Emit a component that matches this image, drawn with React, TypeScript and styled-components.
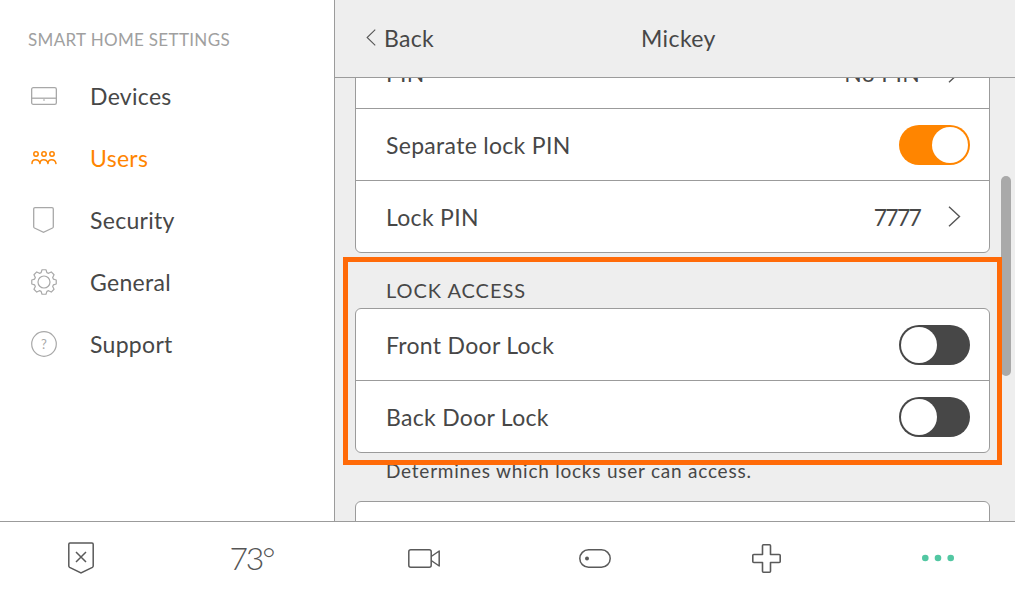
import React from "react";
import styled, { createGlobalStyle } from "styled-components";

const Global = createGlobalStyle`
  html, body { margin: 0; padding: 0; background: #fff; }
  #root { width: 1015px; height: 591px; overflow: hidden; }
  * { box-sizing: border-box; }
`;

const Page = styled.div`
  width: 1015px; height: 591px; display: flex; flex-direction: column;
  font-family: "Lato", "Liberation Sans", sans-serif; color: #474747;
`;
const Top = styled.div`display: flex; height: 521px; position: relative;`;
const Sidebar = styled.nav`
  width: 335px; flex: none; background: #fff; border-right: 1px solid #9b9b9b;
  padding: 30px 0 0 28px;
`;
const SideTitle = styled.div`
  font-size: 17px; line-height: 20px; color: #a0a0a0; margin-bottom: 15px; letter-spacing: .33px;
`;
const SideItem = styled.div<{ $active?: boolean }>`
  display: flex; align-items: center; height: 62px; font-size: 23px; letter-spacing: .3px;
  color: ${p => (p.$active ? "#ff8500" : "#474747")};
`;
const SideIcon = styled.span`
  width: 31px; height: 30px; margin-right: 31px; display: flex; align-items: center; justify-content: center; flex: none;
  svg { display: block; overflow: visible; }
`;
const Main = styled.main`flex: 1; background: #eee; display: flex; flex-direction: column; min-width: 0;`;
const Header = styled.header`
  height: 78px; flex: none; background: #eee; border-bottom: 1px solid #9b9b9b; position: relative; z-index: 2;
  display: grid; grid-template-columns: 275px auto; align-items: center; padding: 0 0 2px 31px; font-size: 23px; letter-spacing: .4px;
`;
const BackLink = styled.div`display: flex; align-items: center; gap: 8px; letter-spacing: .3px; svg { display: block; }`;
const Body = styled.div`flex: 1; overflow: hidden; padding: 0 25px 0 20px;`;
const Card = styled.div<{ $shift?: boolean }>`
  background: #fff; border: 1px solid #9b9b9b; border-radius: 6px;
  margin-top: ${p => (p.$shift ? "-42px" : "0")};
`;
const Row = styled.div`
  height: 72px; display: flex; align-items: center; justify-content: space-between;
  padding: 0 19px 0 30px; font-size: 23px; letter-spacing: .3px; border-bottom: 1px solid #9b9b9b;
  &:last-child { border-bottom: 0; height: 71px; }
`;
const RowEnd = styled.div`display: flex; align-items: center; gap: 28px; margin-right: 9px; svg { display: block; }`;
const Digits = styled.span`letter-spacing: -1.8px;`;
const SectionLabel = styled.div`
  font-size: 20px; line-height: 24px; padding-left: 31px; margin: 25px 0 6px; letter-spacing: .95px;
`;
const Help = styled.div`
  font-size: 19px; line-height: 24px; padding-left: 31px; margin: 6px 0 18px; letter-spacing: .77px;
`;
const Switch = styled.div<{ $on?: boolean }>`
  width: 71px; height: 40px; border-radius: 20px; padding: 2px; display: flex;
  background: ${p => (p.$on ? "#ff8500" : "#474747")};
  justify-content: ${p => (p.$on ? "flex-end" : "flex-start")};
`;
const Knob = styled.div`width: 36px; height: 36px; border-radius: 50%; background: #fff;`;
const Thumb = styled.div`
  position: absolute; left: 1001px; top: 176px; width: 10px; height: 200px; border-radius: 5px; background: #a9a9a9;
`;
const Highlight = styled.div`
  position: absolute; left: 343px; top: 257px; width: 659px; height: 208px; border: 5px solid #ff6a08; z-index: 3;
`;
const Footer = styled.footer`
  height: 70px; flex: none; background: #fff; border-top: 1px solid #9b9b9b;
  display: grid; grid-template-columns: repeat(6, 60px); column-gap: 111.4px; padding-left: 51px; align-items: center;
`;
const Tab = styled.div`
  display: flex; align-items: center; justify-content: center; height: 69px; padding-top: 3px;
  svg { display: block; overflow: visible; }
`;
const Temp = styled.div`font-size: 32px; font-weight: 300; letter-spacing: -2.2px; color: #555; margin: -1px 0 0 -2px;`;
const QMark = styled.text`font-family: "Lato", sans-serif; font-size: 13px; fill: #a8a8a8;`;

const gearPath = (() => {
  const n = 8, cx = 13, cy = 13, ro = 12.4, ri = 9.8;
  let d = "";
  for (let i = 0; i < n; i++) {
    const a = (i * 2 * Math.PI) / n - Math.PI / 2;
    const w = 0.2, g = 0.2;
    const pts = [
      [ri, a - w - g / 2], [ro, a - w + 0.04], [ro, a + w - 0.04], [ri, a + w + g / 2],
    ];
    pts.forEach(([r, t], j) => {
      const x = (cx + r * Math.cos(t)).toFixed(2), y = (cy + r * Math.sin(t)).toFixed(2);
      d += (i === 0 && j === 0 ? "M" : "L") + x + " " + y + " ";
    });
  }
  return d + "Z";
})();

const G = "#a8a8a8";
const D = "#5a5a5a";

const DevicesIcon = () => (
  <svg width="26" height="18" viewBox="0 0 26 18" fill="none" stroke={G} strokeWidth="1.3">
    <rect x=".65" y=".65" width="24.7" height="16.7" rx="1.6" />
    <path d="M.65 11.2h24.7" />
    <path d="M12 13h2" strokeWidth="1" />
  </svg>
);
const UsersIcon = () => (
  <svg width="26" height="14" viewBox="0 0 26 14" fill="none" stroke="#ff8500" strokeWidth="1.5">
    <circle cx="5" cy="3" r="2.2" /><circle cx="13" cy="3" r="2.2" /><circle cx="21" cy="3" r="2.2" />
    <path d="M1 12.5c0-5 7-5 8 0M9 12.5c0-5 7-5 8 0M17 12.5c0-5 7-5 8 0" strokeLinecap="round" />
  </svg>
);
const ShieldIcon = () => (
  <svg width="21" height="26" viewBox="0 0 21 26" fill="none" stroke={G} strokeWidth="1.3">
    <path d="M2 .7h17a1.3 1.3 0 0 1 1.3 1.3v17.7c0 .6-.3 1-.8 1.3l-9 4.3-9-4.3c-.5-.3-.8-.7-.8-1.3V2A1.3 1.3 0 0 1 2 .7z" />
  </svg>
);
const GearIcon = () => (
  <svg width="26" height="26" viewBox="0 0 26 26" fill="none" stroke={G} strokeWidth="1.2" strokeLinejoin="round">
    <path d={gearPath} /><circle cx="13" cy="13" r="6" />
  </svg>
);
const HelpIcon = () => (
  <svg width="26" height="26" viewBox="0 0 26 26" fill="none" stroke={G} strokeWidth="1.2">
    <circle cx="13" cy="13" r="12.3" />
    <QMark x="13" y="17.5" textAnchor="middle" stroke="none">?</QMark>
  </svg>
);
const Chevron = ({ left, w = 13, h = 21 }: { left?: boolean; w?: number; h?: number }) => (
  <svg width={w} height={h} viewBox="0 0 13 21" preserveAspectRatio="none" fill="none" stroke="#555" strokeWidth="1.4">
    <path d={left ? "M12 .8 1.5 10.5 12 20.2" : "M1 .8l10.5 9.7L1 20.2"} />
  </svg>
);
const ArmedIcon = () => (
  <svg width="26" height="32" viewBox="0 0 26 32" fill="none" stroke={D} strokeWidth="1.5">
    <path d="M2 1h22a1.2 1.2 0 0 1 1.2 1.2V24c0 .6-.3 1-.8 1.3L13 31 1.6 25.3c-.5-.3-.8-.7-.8-1.3V2.2A1.2 1.2 0 0 1 2 1z" />
    <path d="M8 10l10 10M18 10 8 20" />
  </svg>
);
const VideoIcon = () => (
  <svg width="32" height="19" viewBox="0 0 32 19" fill="none" stroke={D} strokeWidth="1.5" strokeLinejoin="round">
    <rect x=".8" y=".8" width="22.4" height="17.4" rx="2" />
    <path d="M23.2 7.5 31.2 2v15l-8-5.5" />
  </svg>
);
const ToggleIcon = () => (
  <svg width="32" height="19" viewBox="0 0 32 19" fill="none" stroke={D} strokeWidth="1.5">
    <rect x=".8" y=".8" width="30.4" height="17.4" rx="8.7" />
    <circle cx="8" cy="9.5" r="2" fill={D} stroke="none" />
  </svg>
);
const CrossIcon = () => (
  <svg width="29" height="29" viewBox="0 0 29 29" fill="none" stroke={D} strokeWidth="1.6" strokeLinejoin="round">
    <path d="M10.5 1.8a1 1 0 0 1 1-1h6a1 1 0 0 1 1 1v8.7h8.7a1 1 0 0 1 1 1v6a1 1 0 0 1-1 1h-8.7v8.7a1 1 0 0 1-1 1h-6a1 1 0 0 1-1-1v-8.7H1.8a1 1 0 0 1-1-1v-6a1 1 0 0 1 1-1h8.700z" />
  </svg>
);
const DotsIcon = () => (
  <svg width="32" height="8" viewBox="0 0 32 8" fill="#52c7a2">
    <circle cx="3.3" cy="4" r="3.3" /><circle cx="16" cy="4" r="3.3" /><circle cx="28.7" cy="4" r="3.3" />
  </svg>
);

const Toggle = ({ on }: { on?: boolean }) => <Switch $on={on}><Knob /></Switch>;

export default function App() {
  return (
    <Page>
      <Global />
      <Top>
        <Sidebar>
          <SideTitle>SMART HOME SETTINGS</SideTitle>
          <SideItem><SideIcon><DevicesIcon /></SideIcon>Devices</SideItem>
          <SideItem $active><SideIcon><UsersIcon /></SideIcon>Users</SideItem>
          <SideItem><SideIcon><ShieldIcon /></SideIcon>Security</SideItem>
          <SideItem><SideIcon><GearIcon /></SideIcon>General</SideItem>
          <SideItem><SideIcon><HelpIcon /></SideIcon>Support</SideItem>
        </Sidebar>
        <Main>
          <Header>
            <BackLink><Chevron left w={10} h={17} />Back</BackLink>
            <div>Mickey</div>
          </Header>
          <Body>
            <Card $shift>
              <Row>PIN<RowEnd>No PIN<Chevron /></RowEnd></Row>
              <Row>Separate lock PIN<Toggle on /></Row>
              <Row>Lock PIN<RowEnd><Digits>7777</Digits><Chevron /></RowEnd></Row>
            </Card>
            <SectionLabel>LOCK ACCESS</SectionLabel>
            <Card>
              <Row>Front Door Lock<Toggle /></Row>
              <Row>Back Door Lock<Toggle /></Row>
            </Card>
            <Help>Determines which locks user can access.</Help>
            <Card><Row /></Card>
          </Body>
        </Main>
        <Thumb />
        <Highlight />
      </Top>
      <Footer>
        <Tab><ArmedIcon /></Tab>
        <Tab><Temp>73°</Temp></Tab>
        <Tab><VideoIcon /></Tab>
        <Tab><ToggleIcon /></Tab>
        <Tab><CrossIcon /></Tab>
        <Tab><DotsIcon /></Tab>
      </Footer>
    </Page>
  );
}
